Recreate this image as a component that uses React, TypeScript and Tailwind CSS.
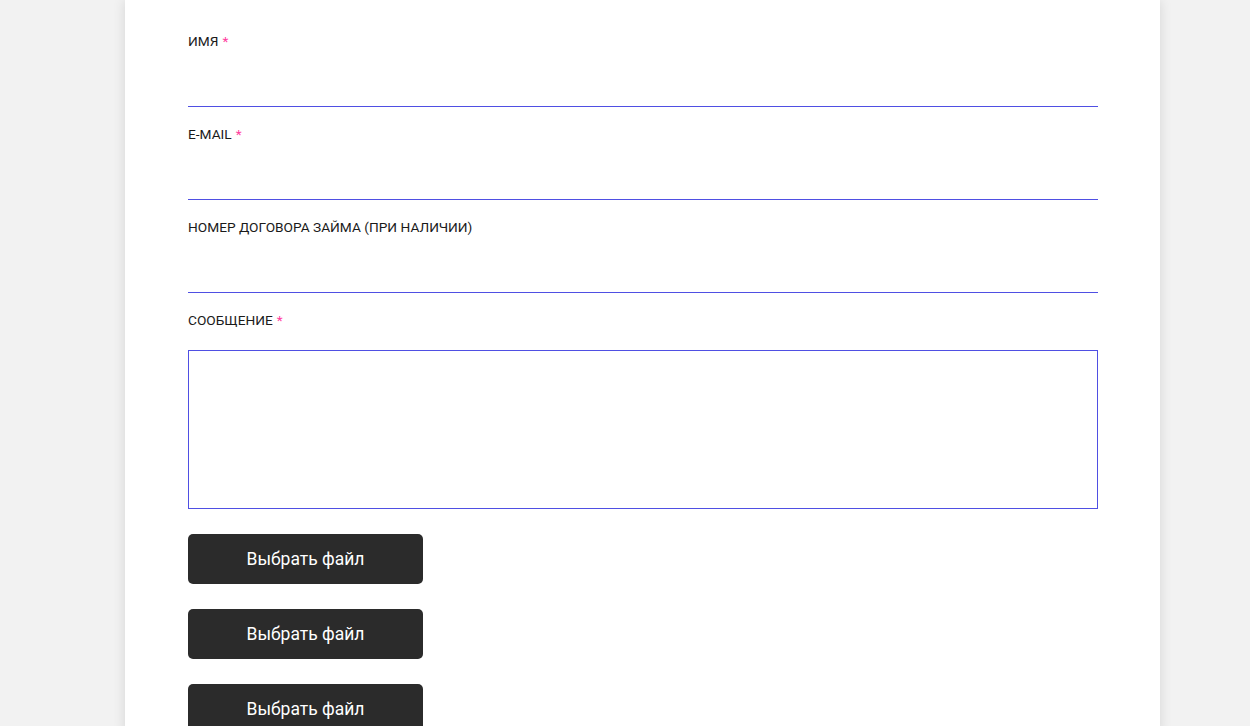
export default function App() {
  const fields = [
    { label: 'Имя', required: true },
    { label: 'E-mail', required: true },
    { label: 'Номер договора займа (при наличии)', required: false },
  ];

  return (
    <div className="min-h-screen bg-[#f2f2f2] font-['Roboto',sans-serif]">
      <div className="ml-[125px] w-[1035px] min-h-[726px] bg-white pl-[63px] pr-[62px] pt-[31px] shadow-[0_0_12px_rgba(0,0,0,0.12)]">
        {fields.map(f => (
          <div key={f.label} className="mb-[17px]">
            <label className="block h-5 text-[13.7px] leading-5 uppercase text-[#1a1a1a]">
              {f.label}
              {f.required && <span className="ml-1 text-[#ff3d9e]">*</span>}
            </label>
            <input className="block w-full h-[56px] border-b border-[#4f4fe3] outline-none" />
          </div>
        ))}

        <label className="block h-5 text-[13.7px] leading-5 uppercase text-[#1a1a1a]">
          Сообщение<span className="ml-1 text-[#ff3d9e]">*</span>
        </label>
        <textarea className="mt-[20px] block w-full h-[159px] border border-[#4f4fe3] outline-none resize-none" />

        <div className="mt-[25px] flex flex-col gap-[25px]">
          {[1, 2, 3].map(i => (
            <button
              key={i}
              className="w-[235px] h-[50px] rounded-[5px] bg-[#2b2b2b] text-white text-[17.5px]"
            >
              Выбрать файл
            </button>
          ))}
        </div>
      </div>
    </div>
  );
}
